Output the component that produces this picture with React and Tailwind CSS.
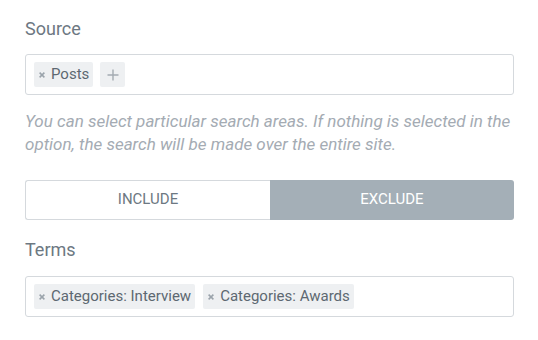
export default function App() {
  const font = { fontFamily: 'Roboto, "Liberation Sans", sans-serif' };
  const Tag = ({ children }) => (
    <div className="flex h-[25px] items-center rounded-[2px] bg-[#eef0f2] pl-[5px] pr-[4px] text-[15px] text-[#5d6871]">
      <svg width="6" height="6" viewBox="0 0 6 6" className="mr-[6px]">
        <path d="M0.6 0.6L5.4 5.4M5.4 0.6L0.6 5.4" stroke="#9aa3ab" strokeWidth="1.5" />
      </svg>
      {children}
    </div>
  );
  return (
    <div className="h-[340px] w-[538px] bg-white pl-[25px] pr-[24px]" style={font}>
      <div className="pt-[19px] text-[18px] leading-[20px] text-[#6d7882]">Source</div>
      <div className="mt-[15px] flex h-[41px] items-center gap-[7px] rounded-[3px] border border-[#d5d9dd] px-[8px]">
        <Tag>Posts</Tag>
        <div className="flex h-[25px] w-[25px] items-center justify-center rounded-[2px] bg-[#eef0f2]">
          <svg width="12" height="12" viewBox="0 0 12 12">
            <path d="M6 0.5V11.5M0.5 6H11.5" stroke="#a4abb2" strokeWidth="1.4" />
          </svg>
        </div>
      </div>
      <p className="mt-[15px] text-[17px] italic leading-[23px] text-[#a4abb3]">
        You can select particular search areas. If nothing is selected in the option, the search will be made over the entire site.
      </p>
      <div className="mt-[23.5px] flex h-[40px] text-[15px] uppercase">
        <div className="flex flex-1 items-center justify-center rounded-l-[3px] border border-r-0 border-[#d5d9dd] text-[#6d7882]">
          Include
        </div>
        <div className="flex flex-1 items-center justify-center rounded-r-[3px] bg-[#a4afb7] text-white">
          Exclude
        </div>
      </div>
      <div className="mt-[20.5px] text-[18px] leading-[20px] text-[#6d7882]">Terms</div>
      <div className="mt-[16px] flex h-[41px] items-center gap-[8px] rounded-[3px] border border-[#d5d9dd] px-[8px]">
        <Tag>Categories: Interview</Tag>
        <Tag>Categories: Awards</Tag>
      </div>
    </div>
  );
}
